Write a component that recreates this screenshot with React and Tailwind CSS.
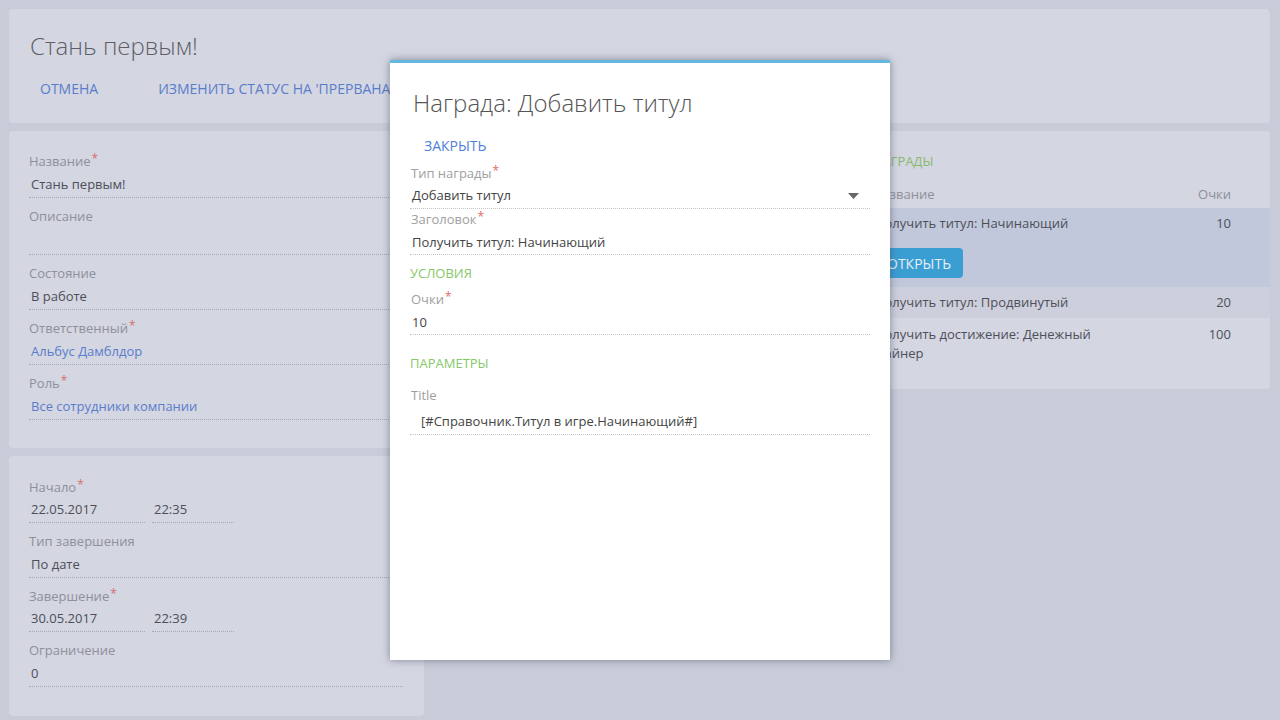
const FONT = { fontFamily: '"Open Sans", "Noto Sans", sans-serif' };

function Field({ label, required, value, link, tall }) {
  return (
    <div className="mt-2 first:mt-0">
      <div className="h-5 leading-5 text-[13px] text-[#8e909c]">
        {label}
        {required && <span className="text-[#d4706c] align-top text-[12px] leading-4 ml-px">*</span>}
      </div>
      <div
        className={`${tall ? 'h-[29px]' : 'h-[27px]'} leading-[26px] text-[13px] pl-0.5 border-b border-dotted border-[#a6a8b5] ${
          link ? 'text-[#5a7dca]' : 'text-[#4d4f58]'
        }`}
      >
        {value}
      </div>
    </div>
  );
}

function DateField({ label, required, date, time }) {
  return (
    <div className="mt-2">
      <div className="h-5 leading-5 text-[13px] text-[#8e909c]">
        {label}
        {required && <span className="text-[#d4706c] align-top text-[12px] leading-4 ml-px">*</span>}
      </div>
      <div className="flex gap-[7px]">
        <div className="w-[116px] h-[26px] leading-[25px] text-[13px] pl-0.5 text-[#4d4f58] border-b border-dotted border-[#a6a8b5]">{date}</div>
        <div className="w-[82px] h-[26px] leading-[25px] text-[13px] pl-0.5 text-[#4d4f58] border-b border-dotted border-[#a6a8b5]">{time}</div>
      </div>
    </div>
  );
}

function ModalField({ label, required, children, className = '' }) {
  return (
    <div className={className}>
      <div className="h-5 leading-5 text-[13px] text-[#a0a0a0] pl-px">
        {label}
        {required && <span className="text-[#e26a62] align-top text-[12px] leading-4 ml-px">*</span>}
      </div>
      {children}
    </div>
  );
}

function Rewards() {
  const rows = [
    { name: 'Получить титул: Продвинутый', pts: 20 },
    { name: 'Получить достижение: Денежный майнер', pts: 100 },
  ];
  return (
    <div className="bg-[#d4d6e2] rounded-sm pt-5 pb-[26px]">
      <div className="px-[18px] h-5 leading-5 text-[13px] text-[#8ab96f]">НАГРАДЫ</div>
      <div className="flex justify-between pl-[18px] pr-[39px] mt-[11px] h-6 leading-6 text-[13px] text-[#8e909c]">
        <span>Название</span>
        <span>Очки</span>
      </div>
      <div className="bg-[#c1c8dc] mt-[2px] pt-[3px] pb-[9px]">
        <div className="flex justify-between pl-[20px] pr-[39px] h-6 leading-6 text-[13px] text-[#4d4f58]">
          <span>Получить титул: Начинающий</span>
          <span>10</span>
        </div>
        <div className="pl-[20px] mt-[13px]">
          <button className="h-[30px] px-[12px] rounded-sm bg-[#3a9ed3] text-[14px] text-[#e6eef7]">ОТКРЫТЬ</button>
        </div>
      </div>
      <div className="bg-[#cdd0dc] h-[31px] pt-px flex justify-between items-center pl-[20px] pr-[39px] text-[13px] text-[#4d4f58]">
        <span>{rows[0].name}</span>
        <span>{rows[0].pts}</span>
      </div>
      <div className="flex justify-between pl-[20px] pr-[39px] pt-[7px] text-[13px] leading-[19px] text-[#4d4f58]">
        <span className="w-[240px]">{rows[1].name}</span>
        <span>{rows[1].pts}</span>
      </div>
    </div>
  );
}

function Modal() {
  return (
    <div className="absolute left-[390px] top-[60px] w-[500px] h-[600px] bg-white border-t-[3px] border-[#64b8e0] shadow-[0_0_8px_rgba(60,64,80,0.55)] px-5">
      <div className="mt-[21px] pl-[3px] h-[38px] leading-[38px] text-[24px] font-light text-[#555]">Награда: Добавить титул</div>
      <div className="mt-[12px] pl-[14px] h-6 leading-6 text-[14px] text-[#4f7fd8]">ЗАКРЫТЬ</div>
      <ModalField label="Тип награды" required className="mt-[5px]">
        <div className="h-[26px] flex items-center justify-between pl-0.5 pr-[11px] text-[13px] text-[#444] border-b border-dotted border-[#c4c4c4]">
          <span>Добавить титул</span>
          <svg width="11" height="6" viewBox="0 0 11 6"><path d="M0 0 H11 L5.5 6 Z" fill="#666" /></svg>
        </div>
      </ModalField>
      <ModalField label="Заголовок" required>
        <div className="h-[26px] leading-[26px] pl-0.5 text-[13px] text-[#444] border-b border-dotted border-[#c4c4c4]">Получить титул: Начинающий</div>
      </ModalField>
      <div className="pt-2 h-[34px] leading-5 text-[13px] text-[#86c767]">УСЛОВИЯ</div>
      <ModalField label="Очки" required>
        <div className="h-[26px] leading-[26px] pl-0.5 text-[13px] text-[#444] border-b border-dotted border-[#c4c4c4]">10</div>
      </ModalField>
      <div className="pt-[18px] h-[50px] leading-5 text-[13px] text-[#86c767]">ПАРАМЕТРЫ</div>
      <ModalField label="Title">
        <div className="h-[30px] leading-[32px] pl-[11px] text-[13px] text-[#444] border-b border-dotted border-[#c4c4c4]">[#Справочник.Титул в игре.Начинающий#]</div>
      </ModalField>
    </div>
  );
}

export default function App() {
  return (
    <div style={FONT} className="relative w-[1280px] h-[720px] overflow-hidden bg-[#c8cbd8] p-[9px] pr-[10px]">
      <div className="bg-[#d4d6e2] rounded-sm h-[114px] px-[21px] pt-[21px]">
        <div className="h-8 leading-8 text-[24px] font-light text-[#5d5f68]">Стань первым!</div>
        <div className="flex mt-[17px] text-[14px] text-[#5a7dca] h-5 leading-5">
          <span className="px-[10px]">ОТМЕНА</span>
          <span className="ml-[40px] px-[10px] whitespace-nowrap">ИЗМЕНИТЬ СТАТУС НА 'ПРЕРВАНА'</span>
        </div>
      </div>

      <div className="grid grid-cols-3 gap-2 mt-2 items-start">
        <div className="flex flex-col gap-2">
          <div className="bg-[#d4d6e2] rounded-sm pt-5 pb-[28px] pl-5 pr-[21px]">
            <Field label="Название" required value="Стань первым!" />
            <Field label="Описание" value="" tall />
            <Field label="Состояние" value="В работе" />
            <Field label="Ответственный" required value="Альбус Дамблдор" link />
            <Field label="Роль" required value="Все сотрудники компании" link />
          </div>
          <div className="bg-[#d4d6e2] rounded-sm pt-[13px] pb-[29px] pl-5 pr-[21px]">
            <DateField label="Начало" required date="22.05.2017" time="22:35" />
            <Field label="Тип завершения" value="По дате" />
            <DateField label="Завершение" required date="30.05.2017" time="22:39" />
            <Field label="Ограничение" value="0" />
          </div>
        </div>
        <div />
        <Rewards />
      </div>

      <Modal />
    </div>
  );
}
